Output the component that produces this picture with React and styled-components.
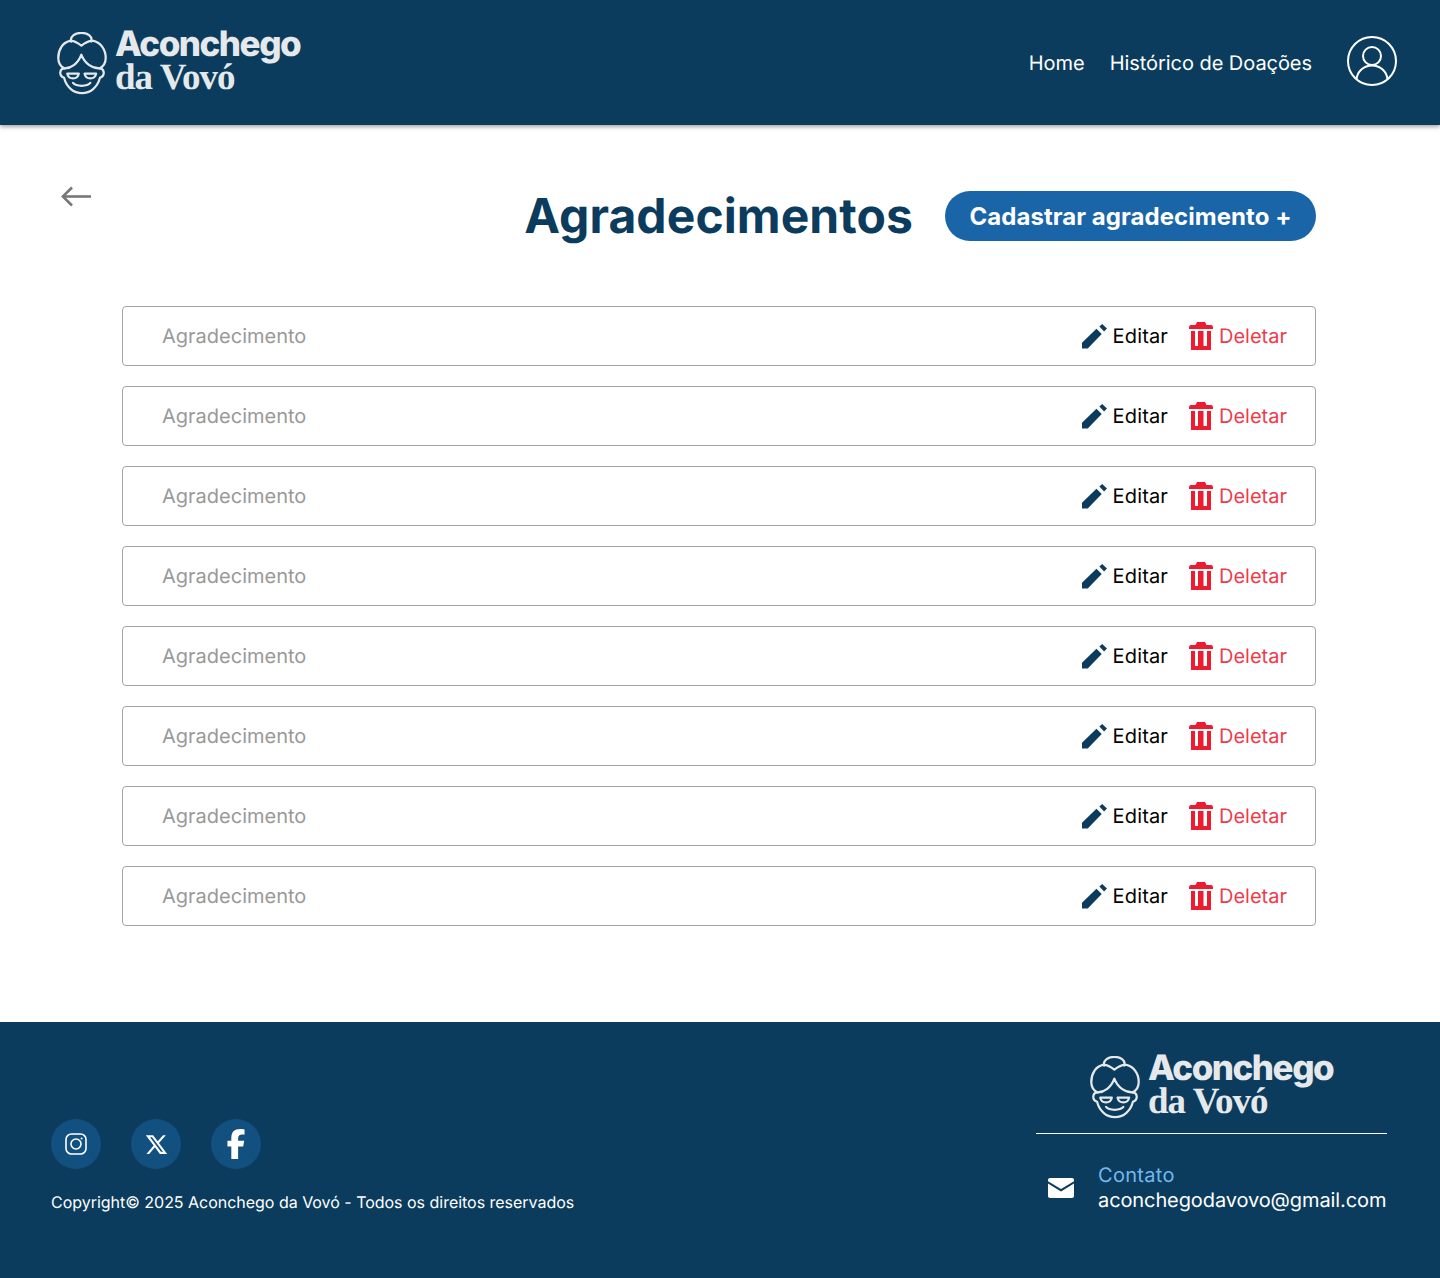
import React from "react";
import styled, { createGlobalStyle } from "styled-components";
import { FaFacebookF } from "react-icons/fa6";
import { RiTwitterXLine } from "react-icons/ri";

const GlobalStyle = createGlobalStyle`
  * {
    box-sizing: border-box;
  }
  body {
    margin: 0;
    font-family: "Inter", sans-serif;
    text-rendering: geometricPrecision;
    background: #fff;
  }
`;

const Page = styled.div`
  width: 1440px;
  min-height: 1278px;
  display: flex;
  flex-direction: column;
`;

const Header = styled.header`
  height: 125px;
  padding: 0 43px 0 57px;
  display: flex;
  align-items: center;
  justify-content: space-between;
  background: #0b3c5d;
  box-shadow: 0 2px 4px rgba(0, 0, 0, 0.35);
`;

const Nav = styled.nav`
  display: flex;
  align-items: center;
  color: #fff;
  font-size: 20px;
  line-height: 24px;
  letter-spacing: -0.05px;
`;

const NavLink = styled.a`
  margin-right: 25px;
  &:last-of-type {
    margin-right: 35px;
  }
`;

const UserSvg = styled.svg`
  flex-shrink: 0;
  margin-top: -3px;
`;

const LogoWrap = styled.div`
  display: flex;
  align-items: center;
  gap: 8px;
  color: #e6e9eb;
`;

const LogoText = styled.div`
  display: flex;
  flex-direction: column;
  margin-top: -4px;
`;

const LogoTop = styled.span`
  font-family: "Inter", sans-serif;
  font-weight: 800;
  font-size: 35px;
  line-height: 34px;
  letter-spacing: -1.5px;
`;

const LogoBottom = styled.span`
  font-family: "Liberation Serif", serif;
  font-weight: 700;
  font-size: 37px;
  line-height: 33px;
  letter-spacing: -1px;
`;

const Main = styled.main`
  flex: 1;
  padding: 60px 124px 96px 122px;
`;

const TopRow = styled.div`
  display: flex;
  align-items: flex-start;
  margin-bottom: 65px;
`;

const BackButton = styled.button`
  margin: 0 0 0 -61px;
  padding: 0;
  width: 31px;
  height: 24px;
  border: 0;
  background: none;
  display: flex;
`;

const Title = styled.h1`
  margin: 6px 32px -6px auto;
  height: 50px;
  line-height: 50px;
  font-size: 48px;
  font-weight: 700;
  letter-spacing: 0.08px;
  color: #0b3c5d;
`;

const AddButton = styled.button`
  width: 371px;
  height: 50px;
  margin-top: 6px;
  border: 0;
  border-radius: 25px;
  background: #1a65a8;
  color: #fff;
  font-family: "Inter", sans-serif;
  font-size: 24px;
  font-weight: 700;
  letter-spacing: 0.05px;
`;

const List = styled.div`
  display: flex;
  flex-direction: column;
  gap: 20px;
`;

const Row = styled.div`
  height: 60px;
  padding: 0 28px 0 39px;
  display: flex;
  align-items: center;
  border: 1px solid #a3a3a3;
  border-radius: 4px;
  font-size: 20px;
`;

const RowLabel = styled.span`
  flex: 1;
  color: #999;
`;

const Action = styled.span`
  display: flex;
  align-items: center;
  gap: 6px;
  color: ${(p) => (p.$danger ? "#ed3b4c" : "#000")};
  margin-left: ${(p) => (p.$danger ? "21px" : "0")};
  letter-spacing: ${(p) => (p.$danger ? "0" : "0.15px")};
`;

const Footer = styled.footer`
  height: 256px;
  padding: 20px 53px 0 51px;
  display: flex;
  justify-content: space-between;
  background: #0b3c5d;
  color: #fff;
`;

const FooterLeft = styled.div`
  padding-top: 77px;
`;

const Socials = styled.div`
  display: flex;
  gap: 30px;
  margin-bottom: 23px;
`;

const SocialIcon = styled.a`
  width: 50px;
  height: 50px;
  border-radius: 50%;
  background: #125080;
  display: flex;
  align-items: center;
  justify-content: center;
  color: #fff;
`;

const Copyright = styled.p`
  margin: 0;
  font-size: 16px;
  line-height: 20px;
  letter-spacing: -0.02px;
`;

const FooterRight = styled.div`
  width: 351px;
`;

const FooterLogo = styled.div`
  height: 92px;
  padding: 0 0 2px 54px;
  display: flex;
  align-items: center;
  border-bottom: 1px solid #fff;
`;

const Contact = styled.div`
  margin-top: 29px;
  padding-left: 12px;
  display: flex;
  align-items: center;
  gap: 24px;
`;

const ContactText = styled.div`
  display: flex;
  flex-direction: column;
  font-size: 20px;
  line-height: 25px;
  letter-spacing: -0.1px;
`;

const ContactLabel = styled.span`
  color: #72b8ef;
  letter-spacing: 0.3px;
`;

const IconSvg = styled.svg`
  flex-shrink: 0;
`;

const GrannySvg = styled.svg`
  flex-shrink: 0;
  margin-top: 2px;
`;

const GrannyIcon = () => (
  <GrannySvg width="50" height="63" viewBox="18 18 156 195" fill="none" stroke="#e6e9eb" strokeWidth="7" strokeLinecap="round" strokeLinejoin="round">
    <path d="M62 47C58 30 76 20 94 20C112 20 130 30 125 47" />
    <path d="M94 60C82 50 72 43 58 45C36 50 22 72 22 98C22 114 30 125 42 131C62 130 84 116 94 88C104 116 128 130 150 131C162 125 170 114 170 98C170 72 154 50 132 45C118 43 106 50 94 60Z" />
    <path d="M42 131C26 132 22 152 40 160C48 190 70 208 96 208C122 208 144 190 152 160C170 152 166 132 150 131" />
    <path d="M50 147H86C84 158 76 162 68 162C60 162 52 158 50 147Z" />
    <path d="M104 147H140C138 158 130 162 122 162C114 162 106 158 104 147Z" />
    <path d="M68 176C78 188 112 188 122 176" />
  </GrannySvg>
);

const Logo = () => (
  <LogoWrap>
    <GrannyIcon />
    <LogoText>
      <LogoTop>Aconchego</LogoTop>
      <LogoBottom>da Vovó</LogoBottom>
    </LogoText>
  </LogoWrap>
);

const UserIcon = () => (
  <UserSvg width="50" height="50" viewBox="0 0 50 50" fill="none" stroke="#fff" strokeWidth="2">
    <circle cx="25" cy="25" r="24" />
    <circle cx="25" cy="20" r="9" />
    <path d="M9.5 43C10.5 35 17 29.5 25 29.5C33 29.5 39.5 35 40.5 43" />
  </UserSvg>
);

const ArrowIcon = () => (
  <IconSvg width="31" height="24" viewBox="0 0 31 24" fill="none" stroke="#77777a" strokeWidth="2.6">
    <path d="M30 11.5H2" />
    <path d="M11 2.5L1.8 11.5L11 20.5" />
  </IconSvg>
);

const PencilIcon = () => (
  <IconSvg width="25" height="26" viewBox="0 0 26 26" fill="#0b3c5d">
    <path d="M0 20L15 5.5L20.5 11L6 26H0Z" />
    <path d="M18 3.2L21 0.4L26 5.2L23 8.2Z" />
  </IconSvg>
);

const TrashIcon = () => (
  <IconSvg width="24" height="28" viewBox="0 0 24 28" fill="#ed1c2e">
    <path d="M8 0H16L17.5 3H22C23.2 3 24 4 24 5.5V7H0V5.5C0 4 0.8 3 2 3H6.5Z" />
    <path d="M2 9H6V24H9V9H14.5V24H18V9H22V28H2Z" />
  </IconSvg>
);

const MailIcon = () => (
  <IconSvg width="26" height="20" viewBox="0 0 26 20" fill="#fff">
    <path d="M2 0H24C25.1 0 26 0.9 26 2V3.2L13 11L0 3.2V2C0 0.9 0.9 0 2 0Z" />
    <path d="M0 5.6L13 13.4L26 5.6V18C26 19.1 25.1 20 24 20H2C0.9 20 0 19.1 0 18Z" />
  </IconSvg>
);

const InstagramIcon = () => (
  <IconSvg width="22" height="22" viewBox="0 0 22 22" fill="none" stroke="#fff" strokeWidth="1.6">
    <rect x="1" y="1" width="20" height="20" rx="5.5" />
    <circle cx="11" cy="11" r="5" />
    <circle cx="16.6" cy="5.4" r="1" fill="#fff" stroke="none" />
  </IconSvg>
);

const rows = Array.from({ length: 8 }, (_, i) => i);

export default function App() {
  return (
    <Page>
      <GlobalStyle />
      <Header>
        <Logo />
        <Nav>
          <NavLink>Home</NavLink>
          <NavLink>Histórico de Doações</NavLink>
          <UserIcon />
        </Nav>
      </Header>
      <Main>
        <TopRow>
          <BackButton>
            <ArrowIcon />
          </BackButton>
          <Title>Agradecimentos</Title>
          <AddButton>Cadastrar agradecimento +</AddButton>
        </TopRow>
        <List>
          {rows.map((r) => (
            <Row key={r}>
              <RowLabel>Agradecimento</RowLabel>
              <Action>
                <PencilIcon />
                Editar
              </Action>
              <Action $danger>
                <TrashIcon />
                Deletar
              </Action>
            </Row>
          ))}
        </List>
      </Main>
      <Footer>
        <FooterLeft>
          <Socials>
            <SocialIcon>
              <InstagramIcon />
            </SocialIcon>
            <SocialIcon>
              <RiTwitterXLine size={25} />
            </SocialIcon>
            <SocialIcon>
              <FaFacebookF size={30} />
            </SocialIcon>
          </Socials>
          <Copyright>Copyright© 2025 Aconchego da Vovó - Todos os direitos reservados</Copyright>
        </FooterLeft>
        <FooterRight>
          <FooterLogo>
            <Logo />
          </FooterLogo>
          <Contact>
            <MailIcon />
            <ContactText>
              <ContactLabel>Contato</ContactLabel>
              aconchegodavovo@gmail.com
            </ContactText>
          </Contact>
        </FooterRight>
      </Footer>
    </Page>
  );
}
